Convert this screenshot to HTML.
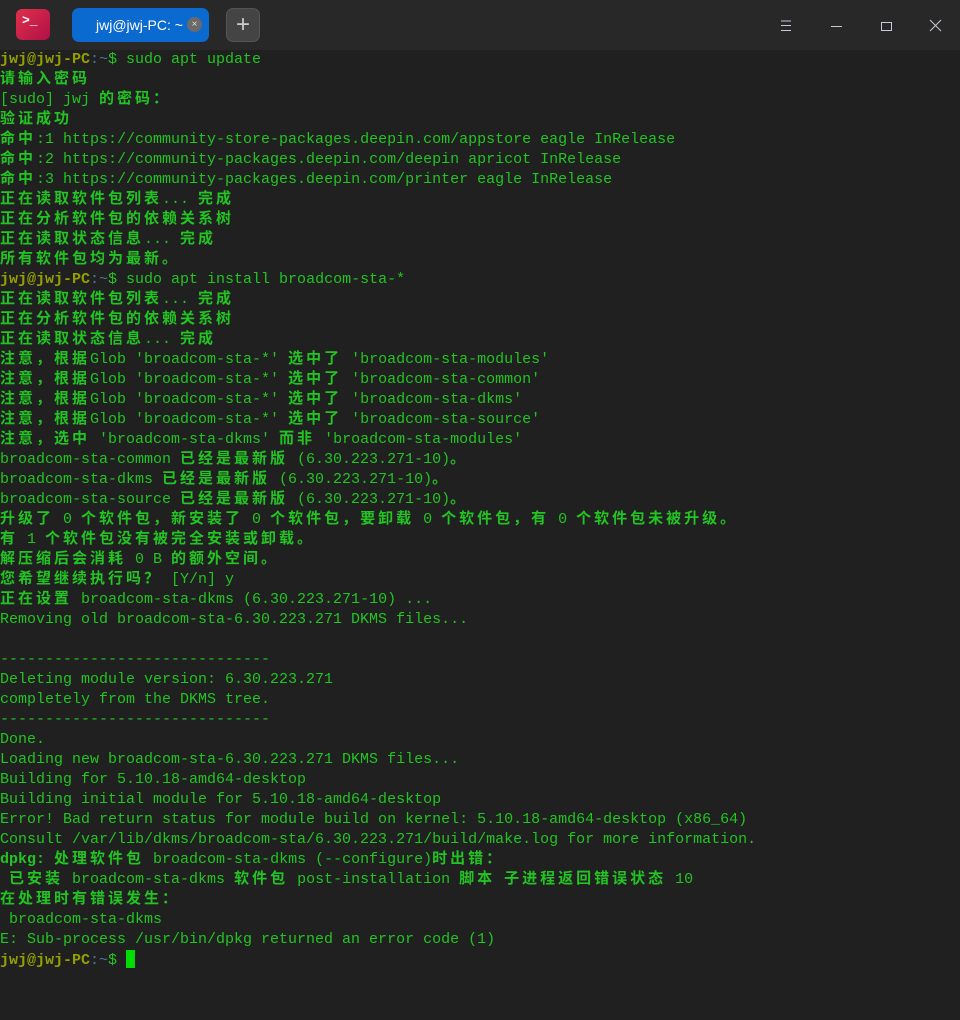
<!DOCTYPE html>
<html><head><meta charset="utf-8"><style>
*{margin:0;padding:0;box-sizing:border-box}
body{width:960px;height:1020px;background:#202020;overflow:hidden;font-family:"Liberation Mono","Noto Sans CJK SC",monospace;}
#tb{height:50px;background:#282828;position:relative}
#logo{position:absolute;left:16px;top:9px;width:34px;height:31px;border-radius:6px;background:linear-gradient(135deg,#e0304a,#b01048);color:#fff;font:bold 13px "Liberation Mono",monospace;padding:6px 0 0 6px;line-height:11px}
#tab{position:absolute;left:72px;top:8px;width:137px;height:34px;border-radius:7px;background:#0a6ad0;color:#fff;font:14px "Liberation Sans",sans-serif;line-height:34px;padding-left:24px}
#x{position:absolute;right:7px;top:9px;width:15px;height:15px;border-radius:50%;background:#6a6a6a;color:#ddd;font:10px/15px "Liberation Sans";text-align:center;padding:0}
#plus{position:absolute;left:226px;top:8px;width:34px;height:34px;border-radius:7px;background:#444;border:1px solid #555;color:#ccc;font:24px/31px "Liberation Sans";text-align:center}
.w{position:absolute;top:0;height:50px}
#term{color:#22c422;font-size:15px}
.l{height:20px;line-height:20px;white-space:pre}
.c{letter-spacing:3px;font-weight:bold}
.u{color:#95a000;font-weight:bold}.b{color:#4a7a98}
#cur{display:inline-block;width:9px;height:18px;background:#00dc00;vertical-align:-4px}
</style></head><body>
<div id="tb">
<div id="logo">&gt;_</div>
<div id="tab">jwj@jwj-PC: ~<div id="x">×</div></div>
<div id="plus">+</div>
<svg class="w" style="left:760px" width="200" height="50"><g stroke="#c8c8d8" stroke-width="1" fill="none">
<path d="M21 21h10M21 25.5h10M21 30.5h10"/><path d="M71 26.5h11"/><rect x="121.5" y="22.5" width="10" height="8"/><path d="M170 20l11 11M181 20l-11 11"/></g></svg>
</div>
<div id="term">
<div class="l"><span class="u">jwj@jwj-PC</span><span class="b">:~</span>$ sudo apt update</div>
<div class="l">请输入密码</div>
<div class="l">[sudo] jwj 的密码：</div>
<div class="l">验证成功</div>
<div class="l">命中:1 https://community-store-packages.deepin.com/appstore eagle InRelease</div>
<div class="l">命中:2 https://community-packages.deepin.com/deepin apricot InRelease</div>
<div class="l">命中:3 https://community-packages.deepin.com/printer eagle InRelease</div>
<div class="l">正在读取软件包列表... 完成</div>
<div class="l">正在分析软件包的依赖关系树</div>
<div class="l">正在读取状态信息... 完成</div>
<div class="l">所有软件包均为最新。</div>
<div class="l"><span class="u">jwj@jwj-PC</span><span class="b">:~</span>$ sudo apt install broadcom-sta-*</div>
<div class="l">正在读取软件包列表... 完成</div>
<div class="l">正在分析软件包的依赖关系树</div>
<div class="l">正在读取状态信息... 完成</div>
<div class="l">注意，根据Glob 'broadcom-sta-*' 选中了 'broadcom-sta-modules'</div>
<div class="l">注意，根据Glob 'broadcom-sta-*' 选中了 'broadcom-sta-common'</div>
<div class="l">注意，根据Glob 'broadcom-sta-*' 选中了 'broadcom-sta-dkms'</div>
<div class="l">注意，根据Glob 'broadcom-sta-*' 选中了 'broadcom-sta-source'</div>
<div class="l">注意，选中 'broadcom-sta-dkms' 而非 'broadcom-sta-modules'</div>
<div class="l">broadcom-sta-common 已经是最新版 (6.30.223.271-10)。</div>
<div class="l">broadcom-sta-dkms 已经是最新版 (6.30.223.271-10)。</div>
<div class="l">broadcom-sta-source 已经是最新版 (6.30.223.271-10)。</div>
<div class="l">升级了 0 个软件包，新安装了 0 个软件包，要卸载 0 个软件包，有 0 个软件包未被升级。</div>
<div class="l">有 1 个软件包没有被完全安装或卸载。</div>
<div class="l">解压缩后会消耗 0 B 的额外空间。</div>
<div class="l">您希望继续执行吗？ [Y/n] y</div>
<div class="l">正在设置 broadcom-sta-dkms (6.30.223.271-10) ...</div>
<div class="l">Removing old broadcom-sta-6.30.223.271 DKMS files...</div>
<div class="l"></div>
<div class="l">------------------------------</div>
<div class="l">Deleting module version: 6.30.223.271</div>
<div class="l">completely from the DKMS tree.</div>
<div class="l">------------------------------</div>
<div class="l">Done.</div>
<div class="l">Loading new broadcom-sta-6.30.223.271 DKMS files...</div>
<div class="l">Building for 5.10.18-amd64-desktop</div>
<div class="l">Building initial module for 5.10.18-amd64-desktop</div>
<div class="l">Error! Bad return status for module build on kernel: 5.10.18-amd64-desktop (x86_64)</div>
<div class="l">Consult /var/lib/dkms/broadcom-sta/6.30.223.271/build/make.log for more information.</div>
<div class="l"><b>dpkg:</b> 处理软件包 broadcom-sta-dkms (--configure)时出错：</div>
<div class="l"> 已安装 broadcom-sta-dkms 软件包 post-installation 脚本 子进程返回错误状态 10</div>
<div class="l">在处理时有错误发生：</div>
<div class="l"> broadcom-sta-dkms</div>
<div class="l">E: Sub-process /usr/bin/dpkg returned an error code (1)</div>
<div class="l"><span class="u">jwj@jwj-PC</span><span class="b">:~</span>$ <span id="cur"></span></div>
</div>
<script>
document.querySelectorAll('.l').forEach(function(d){
 d.childNodes.forEach(function(n){
  if(n.nodeType===3&&/[^\x00-\x7f]/.test(n.nodeValue)){
   var s=document.createElement('span');
   s.innerHTML=n.nodeValue.replace(/&/g,'&amp;').replace(/</g,'&lt;').replace(/([^\x00-\x7f]+)/g,'<span class="c">$1</span>');
   d.replaceChild(s,n);
  }
 });
});
</script>
</body></html>
